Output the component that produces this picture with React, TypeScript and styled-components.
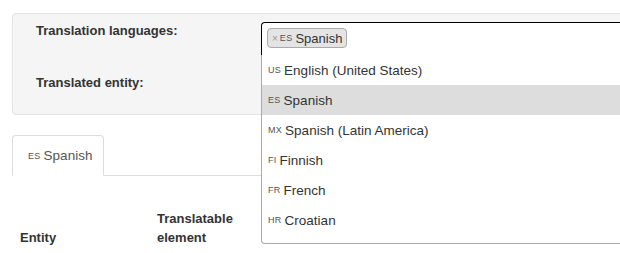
import * as React from 'react'
import styled, { createGlobalStyle } from 'styled-components'

interface ILanguage {
  code: string
  name: string
}

const languages: ILanguage[] = [
  { code: 'us', name: 'English (United States)' },
  { code: 'es', name: 'Spanish' },
  { code: 'mx', name: 'Spanish (Latin America)' },
  { code: 'fi', name: 'Finnish' },
  { code: 'fr', name: 'French' },
  { code: 'hr', name: 'Croatian' }
]

const GlobalStyle = createGlobalStyle`
  html, body {
    margin: 0;
    padding: 0;
    background: #fff;
    overflow: hidden;
  }
  body {
    font-family: "Liberation Sans", Arial, sans-serif;
    font-size: 13px;
    color: #333;
  }
`

const Page = styled.div`
  width: 760px;
  padding: 13px 0 0 12px;
`

const Well = styled.div`
  position: relative;
  height: 100px;
  background: #f5f5f5;
  border: 1px solid #e3e3e3;
  border-radius: 4px;
  display: grid;
  grid-template-columns: 225px 1fr;
  grid-template-rows: 52px 48px;
  padding: 0 0 0 23px;
`

const Label = styled.div`
  font-weight: bold;
  font-size: 13px;
  line-height: 16px;
  color: #333;
  padding-top: 9px;
`

const Field = styled.div`
  position: relative;
  padding-top: 8px;
`

const SelectBox = styled.div`
  position: relative;
  z-index: 2;
  height: 33px;
  box-sizing: border-box;
  background: #fff;
  border: 1px solid #000;
  border-bottom: none;
  border-right: none;
  border-radius: 4px 0 0 0;
  display: flex;
  align-items: flex-start;
  padding: 5px 0 0 5px;
`

const Tag = styled.span`
  display: inline-flex;
  align-items: center;
  height: 20px;
  padding: 0 4px;
  background: #e4e4e4;
  border: 1px solid #aaa;
  border-radius: 4px;
  font-size: 13px;
  color: #333;
  box-sizing: border-box;
`

const Remove = styled.span`
  color: #999;
  font-size: 10px;
  margin-right: 2px;
`

const Code = styled.span`
  font-size: 9px;
  text-transform: uppercase;
  color: #555;
  letter-spacing: 0.3px;
  margin-right: 3px;
`

const Dropdown = styled.ul`
  position: absolute;
  z-index: 3;
  left: 0;
  top: 41px;
  width: 400px;
  margin: 0;
  padding: 0 0 8px 0;
  list-style: none;
  background: #fff;
  border-left: 1px solid #aaa;
  border-bottom: 1px solid #aaa;
  border-radius: 0 0 0 4px;
`

const Option = styled.li<{ selected?: boolean }>`
  height: 30px;
  display: flex;
  align-items: center;
  padding-left: 6px;
  background: ${({ selected }) => (selected ? '#ddd' : '#fff')};
  color: #333;
  font-size: 13.5px;
`

const Tabs = styled.div`
  margin-top: 20px;
  display: flex;
  border-bottom: 1px solid #ddd;
  height: 40px;
`

const Tab = styled.div`
  height: 41px;
  box-sizing: border-box;
  width: 92px;
  border: 1px solid #ddd;
  border-bottom-color: #fff;
  border-radius: 4px 4px 0 0;
  display: flex;
  align-items: center;
  padding-left: 15px;
  color: #555;
  background: #fff;
  font-size: 13.5px;
`

const Table = styled.table`
  margin-top: 33px;
  border-collapse: collapse;
`

const Th = styled.th<{ width: number }>`
  width: ${({ width }) => width}px;
  text-align: left;
  vertical-align: bottom;
  padding: 0 8px;
  font-size: 13px;
  line-height: 19px;
  font-weight: bold;
  color: #333;
`

export default function App() {
  return (
    <>
      <GlobalStyle />
      <Page>
        <Well>
          <Label>Translation languages:</Label>
          <Field>
            <SelectBox>
              <Tag>
                <Remove>×</Remove>
                <Code>es</Code>Spanish
              </Tag>
            </SelectBox>
            <Dropdown>
              {languages.map((lang: ILanguage) => (
                <Option key={lang.code} selected={lang.code === 'es'}>
                  <Code>{lang.code}</Code>
                  {lang.name}
                </Option>
              ))}
            </Dropdown>
          </Field>
          <Label>Translated entity:</Label>
          <div />
        </Well>
        <Tabs>
          <Tab>
            <Code>es</Code>Spanish
          </Tab>
        </Tabs>
        <Table>
          <thead>
            <tr>
              <Th width={121}>Entity</Th>
              <Th width={120}>
                Translatable
                <br />
                element
              </Th>
            </tr>
          </thead>
        </Table>
      </Page>
    </>
  )
}
